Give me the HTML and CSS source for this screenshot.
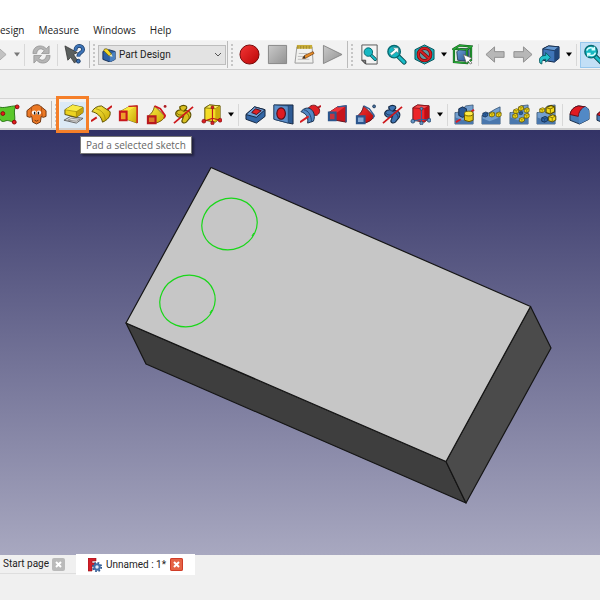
FILE: index.html
```html
<!DOCTYPE html>
<html lang="en">
<head>
<meta charset="utf-8">
<title>Part Design</title>
<link rel="stylesheet" href="styles.css">
</head>
<body>
<svg class="defs" aria-hidden="true">
  <defs>
    <linearGradient id="gray" x1="0" y1="0" x2="1" y2="1"><stop offset="0" stop-color="#c9c9c9"/><stop offset="1" stop-color="#929292"/></linearGradient>
    <linearGradient id="red" x1="0" y1="0" x2="1" y2="1"><stop offset="0" stop-color="#f43636"/><stop offset="1" stop-color="#b90505"/></linearGradient>
    <linearGradient id="yellow" x1="0" y1="0" x2="1" y2="1"><stop offset="0" stop-color="#fcee4a"/><stop offset="1" stop-color="#c8a800"/></linearGradient>
    <linearGradient id="blue" x1="0" y1="0" x2="1" y2="1"><stop offset="0" stop-color="#6d9fd6"/><stop offset="1" stop-color="#285290"/></linearGradient>
    <symbol id="lens" viewBox="0 0 22 22">
      <path d="M13 13l6 6" stroke="#07484c" stroke-width="5" stroke-linecap="round"/>
      <path d="M13 13l6 6" stroke="#19bcc8" stroke-width="3" stroke-linecap="round"/>
      <circle cx="8.500" cy="8" r="6.500" fill="#16b8c2" stroke="#086a72" stroke-width="1.500"/>
    </symbol>
    <symbol id="cubelet" viewBox="0 0 8 8">
      <path d="M1 2.500L4.500 1 7 2v3.500L4 7 1 6z" fill="#f5da19" stroke="#544800" stroke-width=".8"/>
      <path d="M1 2.500l3 1 3-1.500M4 3.500V7" fill="none" stroke="#806d00" stroke-width=".7"/>
    </symbol>
    <symbol id="bluecubelet" viewBox="0 0 8 8">
      <path d="M1 2.500L4.500 1 7 2v3.500L4 7 1 6z" fill="#2e64a5" stroke="#102544" stroke-width=".8"/>
      <path d="M1 2.500l3 1 3-1.500M4 3.500V7" fill="none" stroke="#1b3e6d" stroke-width=".7"/>
    </symbol>
    <symbol id="slab" viewBox="0 0 22 22">
      <path d="M1 9c5 0 9-3 11-7l8-1v20H1z" fill="#739fcf" stroke="#35506f" stroke-width=".8"/>
      <path d="M1 14l8 3 11-4v8H1z" fill="#4a77ad"/>
    </symbol>
  </defs>
</svg>

<nav class="menubar" aria-label="Main menu">
  <a href="#design">esign</a>
  <a href="#measure">Measure</a>
  <a href="#windows">Windows</a>
  <a href="#help">Help</a>
</nav>

<div class="toolbar toolbar-file" role="toolbar" aria-label="File and view">
  <button class="tool" aria-label="Redo"><svg viewBox="0 0 22 22"><path d="M2 8h9V3l9 8-9 8v-5H2z" fill="#c2c2c2" stroke="#aaa"/></svg></button>
  <button class="drop" aria-label="Redo list"><svg viewBox="0 0 8 5"><path d="M1 .5h6L4 4.500z" fill="#777"/></svg></button>
  <span class="sep"></span>
  <button class="tool" aria-label="Refresh"><svg viewBox="0 0 22 22"><path d="M2 10C2 1 12 0 16 5l3-3v8h-8l3-3C10 3 6 6 6 10zM20 12c0 9-10 10-14 5l-3 3v-8h8l-3 3c4 4 8 1 8-3z" fill="#b5b5b5" stroke="#929292" stroke-width=".8"/></svg></button>
  <span class="sep"></span>
  <button class="tool" aria-label="What's this?"><svg viewBox="0 0 22 22"><path d="M1 2l13 7-4 2 4 6-3 3-4-6-3 3z" fill="#5a5f5e" stroke="#333" stroke-width=".8"/><path d="M12 7c0-7 8-6 8-1 0 3-5 3-5 7" fill="none" stroke="#183965" stroke-width="4"/><path d="M12 7c0-7 8-6 8-1 0 3-5 3-5 7" fill="none" stroke="#3d73b5" stroke-width="2.500"/><circle cx="15" cy="18" r="2" fill="#3d73b5" stroke="#183965"/></svg></button>
  <span class="end"></span><span class="grip"></span>
  <div class="workbench">
    <svg viewBox="0 0 16 16"><path d="M1 4l7-2 7 2v9l-6 3-8-3z" fill="#2e62a5" stroke="#142b4f"/><path d="M9 7l6-3v9l-6 3z" fill="#4c83c2"/><path d="M3 1h3l5 6-3 2-6-6z" fill="#f5da28" stroke="#625300" stroke-width=".8"/><path d="M8 9l4 1-1-3z" fill="#f8eeb5"/></svg>
    <select aria-label="Workbench"><option>Part Design</option></select>
    <svg class="chevron" viewBox="0 0 8 8"><path d="M1 2l3 3 3-3" fill="none" stroke="#555"/></svg>
  </div>
  <span class="end"></span><span class="grip"></span>
  <div class="group macros">
    <button class="tool" aria-label="Record macro"><svg viewBox="0 0 22 22"><circle cx="11" cy="11" r="10" fill="url(#red)" stroke="#720505"/></svg></button>
    <button class="tool" aria-label="Stop macro"><svg viewBox="0 0 22 22"><path d="M1.500 1.500h19v19h-19z" fill="url(#gray)" stroke="#858585"/></svg></button>
    <button class="tool" aria-label="Edit macro"><svg viewBox="0 0 22 22"><path d="M3 3h16l1 17H1z" fill="#f1f1ef" stroke="#999"/><path d="M3 1h16v4H3z" fill="#c7ac38"/><path d="M4 2v3m3-3v3m3-3v3m3-3v3m3-3v3" stroke="#a08a30"/><path d="M5 10h9m-10 3h7m-7 3h12" stroke="#bbb"/><path d="M9 15l2-3 9-4 1 2-9 5z" fill="#e88d25" stroke="#774112" stroke-width=".8"/><path d="M9 15l2-3 1 3z" fill="#333"/></svg></button>
    <button class="tool" aria-label="Run macro"><svg viewBox="0 0 22 22"><path d="M1.500 1.500L21 11 1.500 20.500z" fill="url(#gray)" stroke="#858585"/></svg></button>
  </div>
  <span class="end"></span><span class="grip"></span>
  <div class="group zooms">
    <button class="tool" aria-label="Fit all"><svg viewBox="0 0 22 22"><path d="M3 1h16v20H7l-4-4z" fill="#f3f3f3" stroke="#555"/><path d="M3 17h4v4z" fill="#888" stroke="#444"/><use href="#lens" x="4" y="3" width="15" height="15"/></svg></button>
    <button class="tool" aria-label="Fit selection"><svg viewBox="0 0 22 22"><use href="#lens" x="0" y="0" width="22" height="22"/><path d="M4 10l5-4-2-2h6v6l-2-2-5 4z" fill="#fff" stroke="#24636a" stroke-width=".6"/></svg></button>
    <button class="tool" aria-label="Draw style"><svg viewBox="0 0 22 22"><path d="M11 1l10 5v10l-10 5-10-5V6z" fill="#15aeb9" stroke="#075158"/><circle cx="11" cy="11" r="6.500" fill="#5f9aa2" stroke="#700b0b" stroke-width="3.400"/><path d="M6.500 7l9 8" stroke="#700b0b" stroke-width="3.400"/><circle cx="11" cy="11" r="6.500" fill="none" stroke="#d51f24" stroke-width="2"/><path d="M6.500 7l9 8" stroke="#d51f24" stroke-width="2"/></svg></button>
  </div>
  <button class="drop" aria-label="Draw style list"><svg viewBox="0 0 8 5"><path d="M1 .5h6L4 4.500z"/></svg></button>
  <button class="tool" aria-label="Bounding box"><svg viewBox="0 0 22 22"><path d="M2 5l6-3.500 12 1V17l-5 3-13-1z" fill="#dcebdc"/><path d="M5 8l4-3h9v9l-4 4-8-1z" fill="url(#blue)" stroke="#172b44" stroke-width=".8"/><path d="M2 5l6-3.500 12 1L15.500 6zM2 5v14l13.500 1V6M20 2.500V17l-4.500 3" fill="none" stroke="#10501a" stroke-width="2.200"/><path d="M2 5l6-3.500 12 1L15.500 6zM2 5v14l13.500 1V6M20 2.500V17l-4.500 3" fill="none" stroke="#25ad35" stroke-width="1.200"/><path d="M12 11l9 4-3 2 3 3-2 1-2-3-2 2z" fill="#fff" stroke="#555" stroke-width=".7"/></svg></button>
  <span class="sep"></span>
  <button class="tool" aria-label="Previous"><svg viewBox="0 0 22 22"><path d="M1 11l9-8v5h10v6H10v5z" fill="#b7b7b7" stroke="#8e8e8e"/></svg></button>
  <button class="tool" aria-label="Next"><svg viewBox="0 0 22 22"><path d="M21 11l-9-8v5H2v6h10v5z" fill="#b7b7b7" stroke="#8e8e8e"/></svg></button>
  <button class="tool" aria-label="Go to linked object"><svg viewBox="0 0 22 22"><path d="M4 5l6-3 11 1v12l-5 4-12-2z" fill="#3f75b8" stroke="#102543"/><path d="M4 5l6-3 11 1-5 4z" fill="#6497d0" stroke="#102543" stroke-width=".8"/><path d="M16 7l5-4v12l-5 4z" fill="#204578"/><path d="M1 20c-2-5 1-8 6-8V9l5 5-5 5v-3c-3 0-4 1-4 5z" fill="#25c1cb" stroke="#07565c" stroke-width=".9"/></svg></button>
  <button class="drop" aria-label="Link list"><svg viewBox="0 0 8 5"><path d="M1 .5h6L4 4.500z"/></svg></button>
  <span class="sep"></span>
  <button class="tool active" aria-label="Sync view"><svg viewBox="0 0 22 22"><use href="#lens" x="0" y="0" width="22" height="22"/><path d="M4 7c1-4 6-4 8-1m0-3v3H9m4 3c-1 4-6 4-8 1m0 3v-3h3" fill="none" stroke="#d8ffff" stroke-width="1.500"/></svg></button>
</div>

<div class="spacer"></div>

<div class="toolbar toolbar-part" role="toolbar" aria-label="Part design">
  <button class="tool" aria-label="Shape binder"><svg viewBox="0 0 22 22"><path d="M0 3c5 2 11-1 18-1-4 6 0 11-2 17-4 0-6-3-10-1-2 1-4 0-6-3z" fill="#5ac72b" stroke="#257312"/><g fill="#e71b1b" stroke="#820b0b"><circle cx="19" cy="3" r="2"/><circle cx="4" cy="10" r="2"/><circle cx="16" cy="19" r="2"/></g></svg></button>
  <button class="tool" aria-label="Clone"><svg viewBox="0 0 22 22"><path d="M6 3c3-3 8-3 10 0l5 4v6l-3 1-2-1-1 6-4 2-4-2-1-6-2 1-3-1V7z" fill="#ec7925" stroke="#6e3410"/><path d="M6 3L5 13M16 3l1 10" stroke="#ad4e15"/><circle cx="8.500" cy="9" r="2.300" fill="#fff"/><circle cx="13.500" cy="9" r="2.300" fill="#fff"/><path d="M9 8v3m4-3v3" stroke="#111" stroke-width="1.500"/><path d="M9 17q2 2 4 0" fill="none" stroke="#6e3410"/></svg></button>
  <span class="end"></span><span class="grip"></span>
  <div class="group additive">
    <div class="pad-tool">
      <button class="tool hover" aria-label="Pad" aria-describedby="pad-tip"><svg viewBox="0 0 22 22"><path d="M1 17l7-4 13 2-7 5z" fill="#ddd" stroke="#555" stroke-width=".9"/><path d="M5 17l4-2 9 1-4 2z" fill="none" stroke="#777" stroke-width=".7"/><path d="M2 6l8-5 11 2.500V9l-7 5-12-3z" fill="#ecd220" stroke="#4e4300" stroke-width=".9"/><path d="M2 6l8-5 11 2.500L14 8z" fill="#f8ea45"/><path d="M14 8v6l7-5V3.500z" fill="#c3a50e"/><path d="M2 6l12 2 7-4.500M14 8v6" fill="none" stroke="#8d7900" stroke-width=".6"/></svg></button>
      <span class="frame"></span>
      <span class="tooltip" role="tooltip" id="pad-tip">Pad a selected sketch</span>
    </div>
    <button class="tool" aria-label="Revolution"><svg viewBox="0 0 22 22"><path d="M0 18l6-4M17 6l5-4" stroke="#c91818" stroke-width="2"/><path d="M1 8c2-4 6-6 10-6l9 6c1 5-3 9-8 11-1-6-6-10-11-11z" fill="url(#yellow)" stroke="#5d5000"/><path d="M5 5c6 1 10 6 10 12" fill="none" stroke="#a18c0a" stroke-width=".8"/></svg></button>
    <button class="tool" aria-label="Additive loft"><svg viewBox="0 0 22 22"><path d="M2 8l9-5 9-1v18l-11-4z" fill="#d9bb18" stroke="#6b5600" stroke-width=".8"/><path d="M2 8l9-5 9-1-11 7z" fill="#fbe83a"/><path d="M9 9l11-7v18L9 16z" fill="url(#yellow)"/><path d="M11 2.500L20 2v18" fill="none" stroke="#c8181e" stroke-width="1.500"/><path d="M2 8h7v9H2z" fill="#ee9d2a" stroke="#c8181e" stroke-width="2.200"/></svg></button>
    <button class="tool" aria-label="Additive pipe"><svg viewBox="0 0 22 22"><path d="M2 13c4-3 6-6 7-11l11 11c-2 4-6 6-10 7z" fill="url(#yellow)" stroke="#7b5d08"/><path d="M9 2l6 3 5 7-1 3" fill="none" stroke="#cf1720" stroke-width="1.800"/><path d="M2 13h8v7H2z" fill="#dc7a2a" stroke="#b9181e" stroke-width="2.200"/><circle cx="20" cy="2.500" r="1.500" fill="#ad1c22"/></svg></button>
    <button class="tool" aria-label="Additive helix"><svg viewBox="0 0 22 22"><path d="M7 3c4-3 9-1 7 2l-2 2c5-1 8 3 6 7l-4 5c-3 2-6 0-4-3l1-3c-4 2-9 0-8-4 1-2 3-3 5-3z" fill="#d9c01f" stroke="#5d5000" stroke-width="1.200"/><path d="M7 4c0 4 10 3 10 11M4 9c1 3 5 3 8 2" fill="none" stroke="#7d6b00"/><path d="M1 20L21 3" stroke="#ce171b" stroke-width="1.800"/></svg></button>
    <button class="tool" aria-label="Additive primitive"><svg viewBox="0 0 22 22"><path d="M4 4l5-3 11 1v13l-5 4-11-2z" fill="#f4dc26" stroke="#594d00"/><path d="M4 4l5-3 11 1-5 3z" fill="#fdf060" stroke="#6b5d00" stroke-width=".8"/><path d="M15 5l5-3v13l-5 4z" fill="#cbab0c"/><path d="M12 3v12l-9 3m9-3l8 2m-8-2v5" fill="none" stroke="#bd171c" stroke-width="1.200"/><g fill="#d91e22" stroke="#821015" stroke-width=".7"><circle cx="3" cy="18" r="2"/><circle cx="12" cy="20" r="1.800"/><circle cx="20" cy="17" r="2"/><circle cx="12" cy="3.500" r="1.500"/></g></svg></button>
  </div>
  <button class="drop" aria-label="Additive list"><svg viewBox="0 0 8 5"><path d="M1 .5h6L4 4.500z"/></svg></button>
  <span class="sep"></span>
  <div class="group subtractive">
    <button class="tool" aria-label="Pocket"><svg viewBox="0 0 22 22"><path d="M1 11L10 3l11 3v7l-9 7-11-4z" fill="#3265a4" stroke="#15263f"/><path d="M1 11L10 3l11 3-9 8z" fill="#70a1d8" stroke="#15263f"/><path d="M7 9l4-4 6 2-5 4z" fill="#df2225" stroke="#480b16"/></svg></button>
    <button class="tool" aria-label="Hole"><svg viewBox="0 0 22 22"><path d="M1 1h20v20l-5-1-15-4z" fill="#2d5a94" stroke="#15263f"/><path d="M1 1l15 1v18L1 16z" fill="#5c8fc9" stroke="#24456d" stroke-width=".8"/><ellipse cx="8.500" cy="10" rx="4.500" ry="6" fill="#df1b22" stroke="#540d18" stroke-width="1.200"/></svg></button>
    <button class="tool" aria-label="Groove"><svg viewBox="0 0 22 22"><path d="M14 7l8-5" stroke="#bb1720" stroke-width="2"/><path d="M9 4c3-4 8-3 9-1 4 2 3 8-1 9l-5-1z" fill="#df2025" stroke="#6a1018"/><path d="M1 8c3-4 8-5 11-2 3 2 4 8 2 12l-6 2c1-7-2-10-7-12z" fill="#5388c4" stroke="#192e4a"/><path d="M4 6c5 1 8 6 8 13" fill="none" stroke="#20436f"/><path d="M0 19l9-6" stroke="#d71d22" stroke-width="2"/></svg></button>
    <button class="tool" aria-label="Subtractive loft"><svg viewBox="0 0 22 22"><path d="M2 9l9-6 9-1v17l-11-2z" fill="#c8141c" stroke="#65121c"/><path d="M2 9l9-6 9-1-11 8z" fill="#ee3338"/><path d="M11 3l9-1v17" fill="none" stroke="#335d95" stroke-width="1.500"/><path d="M2 9h7v8H2z" fill="#c5343f" stroke="#2c568d" stroke-width="2.200"/></svg></button>
    <button class="tool" aria-label="Subtractive pipe"><svg viewBox="0 0 22 22"><path d="M2 13c4-3 6-6 7-11l11 11c-2 4-6 6-10 7z" fill="url(#red)" stroke="#5b1420"/><path d="M9 2l6 3 5 7-1 3" fill="none" stroke="#335d95" stroke-width="1.500"/><path d="M2 13h8v7H2z" fill="#86a9d4" stroke="#2c568d" stroke-width="2.200"/><circle cx="20" cy="2.500" r="1.500" fill="#45719f" stroke="#243d5c"/></svg></button>
    <button class="tool" aria-label="Subtractive helix"><svg viewBox="0 0 22 22"><path d="M7 3c4-3 9-1 7 2l-2 2c5-1 8 3 6 7l-4 5c-3 2-6 0-4-3l1-3c-4 2-9 0-8-4 1-2 3-3 5-3z" fill="#3e74b3" stroke="#152a46" stroke-width="1.200"/><path d="M7 4c0 4 10 3 10 11M4 9c1 3 5 3 8 2" fill="none" stroke="#1c3a62"/><path d="M1 20L21 3" stroke="#ce171b" stroke-width="1.800"/></svg></button>
    <button class="tool" aria-label="Subtractive primitive"><svg viewBox="0 0 22 22"><path d="M3 4l5-3 12 1v13l-5 4-12-2z" fill="#ed2529" stroke="#5b121b"/><path d="M3 4l5-3 12 1-5 3z" fill="#f5494b" stroke="#861119" stroke-width=".8"/><path d="M15 5l5-3v13l-5 4z" fill="#bd0f16"/><path d="M12 5v11l-9 2m9-2l8 1m-8-1v4" fill="none" stroke="#31639a" stroke-width="1.200"/><g fill="#6392c4" stroke="#254667" stroke-width=".8"><circle cx="3" cy="18" r="2"/><circle cx="12" cy="20" r="1.800"/><circle cx="20" cy="17" r="2"/><circle cx="12" cy="5" r="1.500"/></g></svg></button>
  </div>
  <button class="drop" aria-label="Subtractive list"><svg viewBox="0 0 8 5"><path d="M1 .5h6L4 4.500z"/></svg></button>
  <span class="sep"></span>
  <div class="group patterns">
    <button class="tool" aria-label="Mirrored"><svg viewBox="0 0 22 22"><use href="#slab" width="22" height="22"/><path d="M5 5l4-2 4 2v7l-4 2-4-2z" fill="#2c5995" stroke="#152b49"/><path d="M2 19l5-3m11-8l3-2" stroke="#d51c25" stroke-width="2"/><path d="M11 10h9v7q-4 3-9 0z" fill="#e6ca16" stroke="#635300"/><ellipse cx="15.500" cy="10" rx="4.500" ry="2.500" fill="#ffec45" stroke="#746100"/></svg></button>
    <button class="tool" aria-label="Linear pattern"><svg viewBox="0 0 22 22"><path d="M1 12c7-1 11-6 19-9v18H1z" fill="#739fcf" stroke="#35506f" stroke-width=".8"/><path d="M1 15l8 3 11-4v7H1z" fill="#4a77ad"/><use href="#bluecubelet" x="1" y="7" width="7" height="8"/><use href="#cubelet" x="8" y="7" width="7" height="8"/><use href="#cubelet" x="15" y="7" width="7" height="8"/></svg></button>
    <button class="tool" aria-label="Polar pattern"><svg viewBox="0 0 22 22"><use href="#slab" width="22" height="22"/><use href="#cubelet" x="9" y="1" width="7" height="7"/><use href="#cubelet" x="4" y="4" width="7" height="7"/><use href="#cubelet" x="15" y="3" width="7" height="7"/><use href="#cubelet" x="3" y="9" width="7" height="7"/><use href="#cubelet" x="15" y="9" width="7" height="7"/><use href="#cubelet" x="10" y="13" width="7" height="7"/><use href="#bluecubelet" x="10" y="7" width="5" height="5"/></svg></button>
    <button class="tool" aria-label="Multi-transform"><svg viewBox="0 0 22 22"><use href="#slab" width="22" height="22"/><use href="#cubelet" x="9" y="0" width="12" height="12"/><use href="#cubelet" x="3" y="3" width="7" height="7"/><use href="#cubelet" x="12" y="10" width="10" height="10"/><use href="#bluecubelet" x="5" y="12" width="8" height="8"/></svg></button>
  </div>
  <span class="sep"></span>
  <button class="tool" aria-label="Fillet"><svg viewBox="0 0 22 22"><path d="M1 12c1-6 4-9 9-10l7 1c3 1 4 3 4 6v7l-10 5-10-4z" fill="#477ab4" stroke="#172b46"/><path d="M1 11c1-5 4-8 9-9l7 1c-4 1-7 5-7 10z" fill="#e01a22" stroke="#670d17"/><path d="M10 14c1-6 4-10 7-11 3 1 4 3 4 6v7l-10 5z" fill="#5289c6"/></svg></button>
  <button class="tool" aria-label="Chamfer"><svg viewBox="0 0 22 22"><path d="M1 11l9-8 11 3v10l-10 5-10-4z" fill="#477ab4" stroke="#172b46"/><path d="M1 11l9-8 11 3-10 9z" fill="#e01a22" stroke="#670d17"/></svg></button>
</div>

<main class="viewport">
  <svg viewBox="0 130 600 425" preserveAspectRatio="xMidYMin meet" role="img" aria-label="Block with two sketched circles">
    <g stroke="#151515" stroke-width="1.200" stroke-linejoin="round">
      <path d="M126 323l320 138.500 20 41.500-320-139z" fill="#3e3e3e"/>
      <path d="M530.500 306.500l20.500 41.500-85 155-20-41.500z" fill="#4b4b4b"/>
      <path d="M211 167.500l319.500 139-84.500 155L126 323z" fill="#c6c6c6"/>
    </g>
    <g fill="none" stroke="#19d719" stroke-width="1.200">
      <ellipse cx="229.500" cy="224" rx="28" ry="25.500" transform="rotate(-22 229.500 224)"/>
      <ellipse cx="187.500" cy="301" rx="28" ry="25.500" transform="rotate(-22 187.500 301)"/>
      <path d="M252 236l2-3M210 313l2-3"/>
    </g>
  </svg>
</main>

<footer class="tabs">
  <div class="tab"><a href="#start">Start page</a><button class="close" aria-label="Close Start page"><svg viewBox="0 0 13 13"><path d="M4 4l5 5m0-5l-5 5" stroke="#fff" stroke-width="2"/></svg></button></div>
  <div class="tab current">
    <svg class="logo" viewBox="0 0 14 14"><path d="M0 0h8v3H4v2h3v3H4v5H0z" fill="#d31e28" stroke="#8e1018" stroke-width=".6"/><circle cx="9" cy="9" r="4.200" fill="none" stroke="#2c548b" stroke-width="1.800" stroke-dasharray="1.700 1.600"/><circle cx="9" cy="9" r="2.700" fill="#e4ecf5" stroke="#416fa9" stroke-width="2"/></svg>
    <a href="#unnamed">Unnamed : 1*</a><button class="close" aria-label="Close Unnamed"><svg viewBox="0 0 13 13"><path d="M4 4l5 5m0-5l-5 5" stroke="#fff" stroke-width="2"/></svg></button>
  </div>
</footer>
</body>
</html>
```
FILE: styles.css
```css
* { box-sizing: border-box; }

body {
  margin: 0;
  min-height: 100vh;
  display: flex;
  flex-direction: column;
  overflow: hidden;
  background: #f0f0f0;
  color: #222;
  font: 10px/20px "Open Sans", "Noto Sans", sans-serif;
}

button { padding: 0; border: 0; background: none; font: inherit; }
a { color: inherit; text-decoration: none; }
svg { display: block; flex: none; }
.defs { position: absolute; width: 0; height: 0; }

.menubar { display: flex; gap: 14px; padding: 20px 0 0; background: #fff; }

.toolbar {
  display: flex;
  align-items: center;
  height: 30px;
  border-top: 1px solid #d5d5d5;
  border-bottom: 2px solid #cfcfcf;
  background: #f2f2f2;
}
.toolbar-file { margin-left: -16px; padding-bottom: 1px; border-top-color: #f5f5f5; border-bottom-width: 1px; }
.toolbar-part { height: 32px; margin-left: -4px; padding-top: 2px; }
.spacer { height: 28px; }

.tool {
  flex: none;
  width: 27px;
  height: 26px;
  display: flex;
  align-items: center;
  justify-content: center;
}
.tool svg { width: 21px; height: 21px; }
.tool.active { background: #c2dff6; border: 1px solid #96c7ed; }
.tool.hover { background: #dceaf6; }

.drop { flex: none; width: 11px; height: 26px; display: flex; align-items: center; justify-content: center; }
.drop svg { width: 8px; height: 5px; }

.sep { flex: none; width: 1px; height: 22px; margin: 0 3px 0 2px; background: #d8d8d8; }
.end { flex: none; width: 1px; align-self: stretch; margin: 0 2px 0 1px; background: #bbb; }
.grip { flex: none; width: 2px; height: 22px; margin: 0 3px 0 1px; border-left: 2px dotted #c6c6c6; }

.workbench { position: relative; flex: none; width: 128px; }
.workbench select {
  display: block;
  width: 100%;
  height: 20px;
  padding: 0 20px 0 20px;
  appearance: none;
  border: 1px solid #bdbdbd;
  border-radius: 0;
  background: #e3e3e3;
  color: #222;
  font: 10px "Roboto", sans-serif;
}
.workbench svg { position: absolute; left: 4px; top: 3px; width: 14px; height: 14px; pointer-events: none; }
.workbench .chevron { left: auto; right: 4px; top: 6px; width: 8px; height: 8px; }

.group { flex: none; display: flex; }
.group .tool { flex: 1; }
.macros { width: 110px; }
.zooms { width: 82px; }
.additive { width: 165px; }
.subtractive { width: 192px; }
.patterns { width: 109px; }

.pad-tool { position: relative; flex: 1; display: flex; }
.frame { position: absolute; inset: -6px -1px -5px -4px; border: 3px solid #f57f29; pointer-events: none; z-index: 2; }
.tooltip {
  position: absolute;
  left: 20px;
  top: 34px;
  z-index: 1;
  padding: 0 5px;
  border: 1px solid #777;
  background: #fff;
  box-shadow: 2px 2px 2px #0006;
  color: #666;
  line-height: 16px;
  white-space: nowrap;
}

.viewport { flex: 1; background: linear-gradient(#333366, #a8a8c0); }
.viewport svg { width: 100%; }

.tabs { display: flex; align-items: flex-start; min-height: 45px; font-family: "Roboto", sans-serif; }
.tab { display: flex; align-items: center; gap: 3px; height: 19px; padding: 0 11px 0 3px; border-bottom: 1px solid #dedede; }
.tab.current { height: 21px; margin-top: -1px; padding: 0 12px; gap: 4px; border: 0; background: #fff; }
.logo { width: 14px; height: 14px; }
.close { width: 13px; height: 13px; border-radius: 2px; background: #bababa; }
.current .close { background: #e56345; box-shadow: inset 0 0 0 1px #cf3c28; }
```
